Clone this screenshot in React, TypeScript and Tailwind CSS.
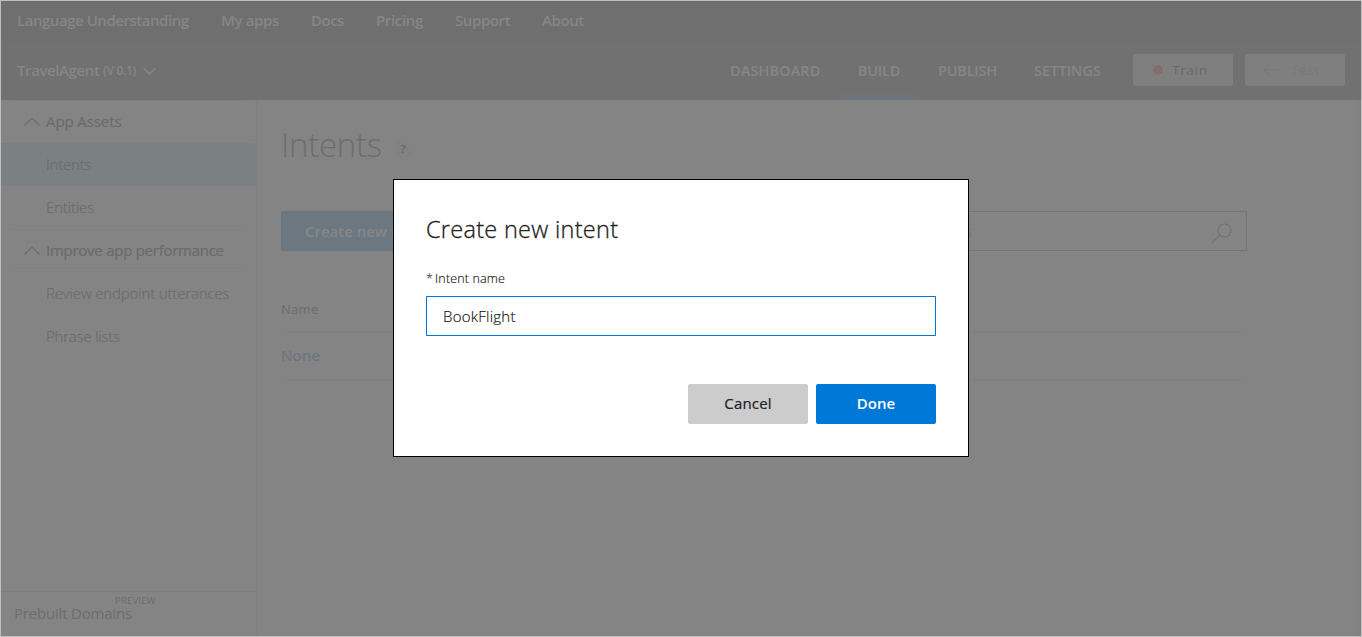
import type { ReactNode } from "react";

function Chevron() {
  return (
    <svg width="16" height="10" viewBox="0 0 16 10" className="fill-none stroke-[#6d6d6d]" strokeWidth="1.2">
      <path d="M0.5 8.5 L8 1 L15.5 8.5" />
    </svg>
  );
}

function Group({ children, className }: { children: ReactNode; className: string }) {
  return (
    <div className="mx-[9px] flex h-[43px] items-center border-y border-[#808080] pl-[14px] text-[#6b6b6b]">
      <Chevron />
      <span className={`ml-[6px] text-[15px] font-medium [-webkit-text-stroke:0.2px] ${className}`}>{children}</span>
    </div>
  );
}

function Item({ children, className }: { children: ReactNode; className: string }) {
  return (
    <div className={`flex h-[43px] items-center pl-[45px] text-[15px] font-light text-[#6c6c6c] [-webkit-text-stroke:0.2px] ${className}`}>
      {children}
    </div>
  );
}

function Header() {
  return (
    <header className="shrink-0 font-semibold text-[#868686]">
      <nav className="flex h-10 items-center bg-[#6f6f6f] pb-[2px] pl-4 text-[15px]">
        <span className="w-[204px] tracking-[-0.46px]">Language Understanding</span>
        <span className="w-[90px] tracking-[-0.35px]">My apps</span>
        <span className="w-[65px] tracking-[-0.5px]">Docs</span>
        <span className="w-[79px] tracking-[-0.35px]">Pricing</span>
        <span className="w-[87px] tracking-[-0.4px]">Support</span>
        <span className="tracking-[-0.4px]">About</span>
      </nav>
      <div className="flex h-[59px] bg-[#717171]">
        <div className="flex flex-1 items-center pl-4">
          <span className="w-[86px] text-[15px] tracking-[-0.4px]">TravelAgent</span>
          <span className="w-[40px] text-[12px] tracking-[-0.3px]">(V 0.1)</span>
          <svg width="13" height="8" viewBox="0 0 13 8" className="fill-none stroke-[#868686]" strokeWidth="1.3">
            <path d="M0.5 1 L6.5 7 L12.5 1" />
          </svg>
        </div>
        <nav className="flex text-[14.5px]">
          <span className="flex w-[109px] items-center tracking-[0.1px]">DASHBOARD</span>
          <span className="flex w-20 items-center justify-center border-b-[5px] border-[#6c757e] pt-[5px] tracking-[-0.2px]">BUILD</span>
          <span className="flex w-[115px] items-center pl-[19px] tracking-[-0.2px]">PUBLISH</span>
          <span className="flex w-[99px] items-center tracking-[0.05px]">SETTINGS</span>
        </nav>
        <div className="flex items-center gap-3 pr-4 pb-[2px] text-[13.5px]">
          <button className="flex h-8 w-[100px] items-center rounded-[2px] bg-[#7f7f7f] pl-5 font-medium text-[#6a6a6a]">
            <span className="mr-2 size-[10px] rounded-full bg-[#856c6e]" />
            <span className="pt-px pl-px tracking-[0.7px]">Train</span>
          </button>
          <button className="flex h-8 w-[100px] items-center rounded-[2px] bg-[#7f7f7f] pl-[18px] font-medium text-[#797979]">
            <svg width="16" height="14" viewBox="0 0 16 14" className="mr-3 fill-none stroke-[#767676]" strokeWidth="1">
              <path d="M15.5 7 H1 M7.5 0.5 L1 7 L7.5 13.5" />
            </svg>
            <span className="pt-px tracking-[0.6px]">Test</span>
          </button>
        </div>
      </div>
    </header>
  );
}

function Sidebar() {
  return (
    <aside className="flex w-64 shrink-0 flex-col border-r border-[#808080]">
      <Group className="tracking-[-0.1px]">App Assets</Group>
      <Item className="bg-[#7b8083] tracking-[-0.2px]">Intents</Item>
      <Item className="tracking-[-0.15px]">Entities</Item>
      <Group className="tracking-[-0.26px]">Improve app performance</Group>
      <Item className="tracking-[-0.16px]">Review endpoint utterances</Item>
      <Item className="tracking-[-0.2px]">Phrase lists</Item>
      <div className="mt-auto flex h-[45px] items-start border-t border-[#7e7e7e] pl-[13px] text-[#6d6d6d]">
        <span className="w-[101px] pt-[13px] text-[15px] leading-4 tracking-[-0.2px] whitespace-nowrap">Prebuilt Domains</span>
        <span className="pt-1 text-[9.5px] leading-[9px] tracking-[0.2px]">PREVIEW</span>
      </div>
    </aside>
  );
}

function Content() {
  return (
    <main className="min-w-0 flex-1 pl-6">
      <div className="flex h-[111px] items-start pt-[21px]">
        <h1 className="w-[113px] text-[33px] leading-[48px] font-light tracking-[-0.3px] text-[#6e6e6e]">Intents</h1>
        <span className="mt-[19px] flex size-[18px] items-center justify-center rounded-full bg-[#828282] text-[11px] font-semibold text-[#686868]">?</span>
      </div>
      <div className="flex w-[966px] justify-between">
        <button className="h-10 w-[180px] rounded-[2px] bg-[#6b7882] pl-6 text-left text-[15px] font-semibold tracking-[-0.02px] text-[#868686]">
          Create new intent
        </button>
        <div className="flex h-10 w-[400px] items-center justify-between border border-[#767676] pr-[14px]">
          <span className="w-[124px] text-right text-[15px] font-light text-[#757575]">Search intents</span>
          <svg width="21" height="21" viewBox="0 0 21 21" className="mt-[4px] fill-none stroke-[#737373]" strokeWidth="1.1">
            <circle cx="13.5" cy="7.5" r="6.5" />
            <path d="M8.8 12.2 L0.8 20.2" />
          </svg>
        </div>
      </div>
      <div className="mt-9 w-[966px] text-[#707070]">
        <div className="flex h-[45px] items-center border-b border-[#808080] pt-[2px] text-[13px] font-medium tracking-[0.3px] [-webkit-text-stroke:0.2px]">Name</div>
        <div className="flex h-12 items-center border-b border-[#808080] text-[15px] font-medium tracking-[0.3px] text-[#6c747e] [-webkit-text-stroke:0.2px]">None</div>
      </div>
    </main>
  );
}

function Dialog() {
  return (
    <section role="dialog" className="absolute top-[178px] left-[392px] flex h-[278px] w-[576px] flex-col border border-black bg-white px-8 text-[#212121]">
      <h2 className="mt-[33px] text-[23.5px] leading-8 font-light tracking-[0.28px] [-webkit-text-stroke:0.3px]">Create new intent</h2>
      <label className="mt-6 text-[12.5px] leading-5 font-light tracking-[0.15px] text-[#111111] [-webkit-text-stroke:0.15px]">
        <span className="mr-[2px] text-[#5c2e34]">*</span>Intent name
      </label>
      <div className="mt-[7px] flex h-10 items-center border border-[#0078d7] px-4 text-[15px] font-light tracking-[0.25px] text-[#111111] [-webkit-text-stroke:0.15px]">BookFlight</div>
      <div className="mt-12 flex justify-end gap-2 text-[15px]">
        <button className="h-10 w-[120px] rounded-[2px] bg-[#cccccc] pb-[2px] font-medium tracking-[0.15px] [-webkit-text-stroke:0.2px]">Cancel</button>
        <button className="h-10 w-[120px] rounded-[2px] bg-[#0078d7] pb-[2px] font-semibold text-white">Done</button>
      </div>
    </section>
  );
}

export default function App() {
  return (
    <div className="relative flex h-[637px] w-[1362px] flex-col overflow-hidden border border-[#bfbfbf] bg-[#848484] font-['Open_Sans','Noto_Sans',sans-serif]">
      <Header />
      <div className="flex min-h-0 flex-1">
        <Sidebar />
        <Content />
        <div className="w-[7px] bg-[#828282]" />
      </div>
      <Dialog />
    </div>
  );
}
